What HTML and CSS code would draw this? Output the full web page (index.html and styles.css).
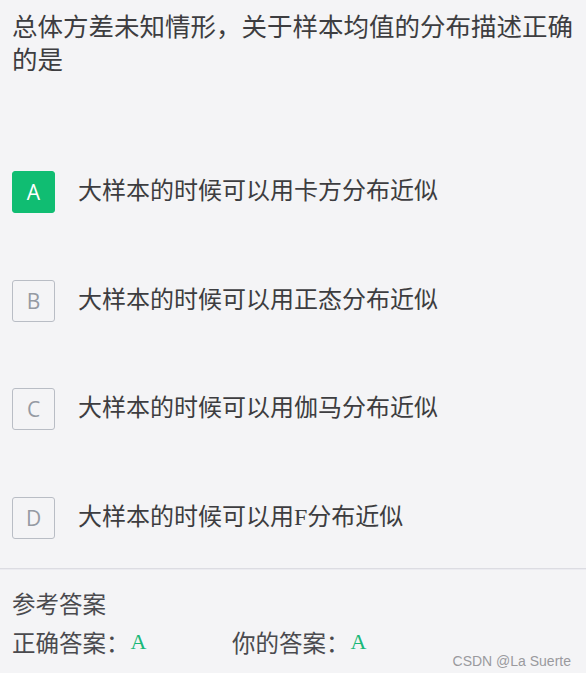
FILE: index.html
```html
<!DOCTYPE html>
<html lang="zh-CN">
<head>
  <meta charset="UTF-8" />
  <meta name="viewport" content="width=device-width, initial-scale=1.0" />
  <title>单选题</title>
  <link rel="stylesheet" href="styles.css">
</head>
<body>

  <!-- Question -->
  <h1 class="question">总体方差未知情形，关于样本均值的分布描述正确的是</h1>

  <!-- Options -->
  <ul class="options">
    <li class="option selected">
      <span class="letter">A</span>
      <span class="text">大样本的时候可以用卡方分布近似</span>
    </li>
    <li class="option">
      <span class="letter">B</span>
      <span class="text">大样本的时候可以用正态分布近似</span>
    </li>
    <li class="option">
      <span class="letter">C</span>
      <span class="text">大样本的时候可以用伽马分布近似</span>
    </li>
    <li class="option">
      <span class="letter">D</span>
      <span class="text">大样本的时候可以用<span class="serif">F</span>分布近似</span>
    </li>
  </ul>

  <!-- Answer -->
  <section class="answer">
    <p class="answer-title">参考答案</p>
    <div class="answer-row">
      <span class="answer-item">正确答案：<b class="mark">A</b></span>
      <span class="answer-item">你的答案：<b class="mark">A</b></span>
    </div>
    <span class="watermark">CSDN @La Suerte</span>
  </section>

</body>
</html>
```

FILE: styles.css
```css
* { margin: 0; padding: 0; box-sizing: border-box; }
body {
  background: #f4f4f6;
  color: #3a3a3c;
  font-family: "Noto Sans CJK SC", "Noto Sans", sans-serif;
  width: 586px;
  height: 673px;
  overflow: hidden;
}

.question {
  font-size: 25.5px;
  font-weight: normal;
  line-height: 33px;
  padding: 8px 10px 0 12px;
  color: #3d3d40;
}

.options {
  list-style: none;
  display: flex;
  flex-direction: column;
  gap: 66.5px;
  margin-top: 97px;
  padding-left: 12px;
}
.option {
  display: flex;
  align-items: center;
  height: 42px;
}
.letter {
  width: 43px;
  height: 42px;
  border: 1px solid #b9bdc5;
  border-radius: 3px;
  display: flex;
  align-items: center;
  justify-content: center;
  color: #959aa3;
  font-family: "Open Sans", "Liberation Sans", sans-serif;
  font-size: 21px;
  flex-shrink: 0;
}
.option.selected .letter {
  background: #10bd72;
  border-color: #10bd72;
  color: #fff;
}
.text {
  font-size: 24px;
  margin-left: 23px;
  margin-top: -7px;
  color: #3d3d40;
}
.serif {
  font-family: "Liberation Serif", serif;
}

.answer {
  position: relative;
  margin-top: 29px;
  border-top: 1px solid #dcdce2;
  box-shadow: inset 0 1px 0 #ebebf0;
  padding: 15px 12px 0;
  height: 110px;
}
.answer-title {
  font-size: 23.5px;
  line-height: 38px;
  color: #4a4a4e;
}
.answer-row {
  display: flex;
  font-size: 23.5px;
  line-height: 39px;
  color: #4a4a4e;
}
.answer-item {
  width: 220px;
}
.mark {
  font-family: "Liberation Serif", serif;
  font-weight: normal;
  font-size: 22px;
  color: #19b878;
  margin-left: 1px;
  vertical-align: 3px;
}
.watermark {
  position: absolute;
  right: 15px;
  bottom: 9px;
  font-family: "Liberation Sans", sans-serif;
  font-size: 14px;
  color: #9a9a9e;
}
```
